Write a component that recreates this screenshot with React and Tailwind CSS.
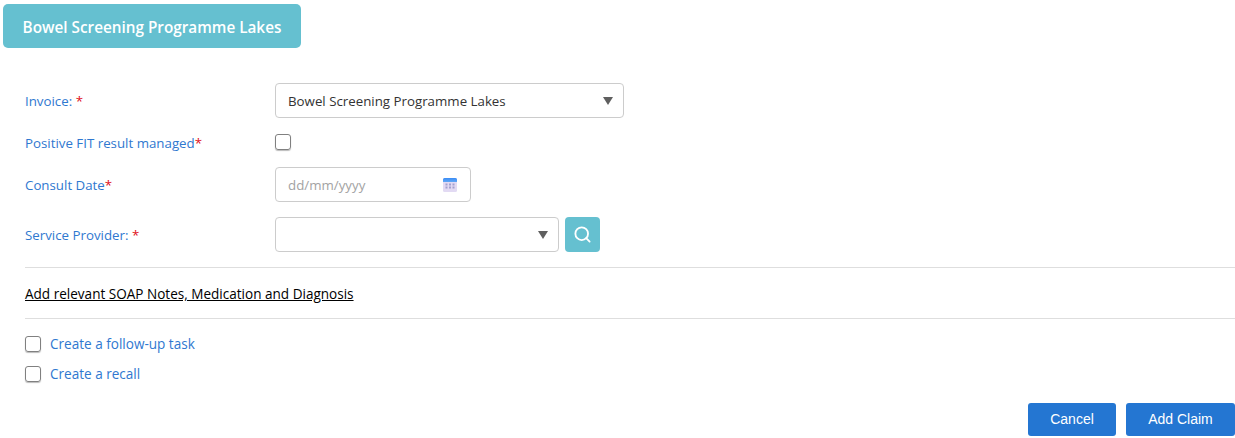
import React from 'react';
import { Search } from 'lucide-react';

const font = "font-['Open_Sans','Noto_Sans',sans-serif]";

const Req = () => <span className="text-[#e0101a]">*</span>;

const Label = ({ children }) => (
  <label className="w-[250px] shrink-0 text-[13.3px] leading-[18px] text-[#2f78d0]">{children}</label>
);

const Caret = () => (
  <svg width="10" height="8" viewBox="0 0 10 8" className="absolute right-[10px] top-[13px]">
    <path d="M0 0h10L5 8z" fill="#5f5f5f" />
  </svg>
);

const Check = ({ className = '' }) => (
  <span className={`block h-4 w-4 shrink-0 rounded-[3px] border border-[#808080] shadow-[0_1px_1px_#bbb] ${className}`} />
);

const CalendarIcon = () => (
  <svg width="14" height="14" viewBox="0 0 14 14" className="absolute right-[13px] top-[10px]">
    <defs>
      <linearGradient id="calTop" x1="0" y1="0" x2="0" y2="1">
        <stop offset="0" stopColor="#3a8cf5" />
        <stop offset="1" stopColor="#62a8f5" />
      </linearGradient>
    </defs>
    <rect x="0" y="0" width="14" height="14" rx="1.5" fill="#e2daf3" />
    <path d="M0 1.5A1.5 1.5 0 0 1 1.5 0h11A1.5 1.5 0 0 1 14 1.5V4H0z" fill="url(#calTop)" />
    <g fill="#a3a1d0">
      <rect x="2.5" y="5.5" width="2" height="2" />
      <rect x="6" y="5.5" width="2" height="2" />
      <rect x="9.5" y="5.5" width="2" height="2" />
      <rect x="2.5" y="8.5" width="2" height="2" />
      <rect x="6" y="8.5" width="2" height="2" />
      <rect x="9.5" y="8.5" width="2" height="2" />
    </g>
  </svg>
);

const App = () => {
  return (
    <div className={`h-[438px] w-[1235px] overflow-hidden bg-white ${font}`}>
      <div className="pl-[3px] pt-1">
        <div className="flex h-11 w-[298px] items-center justify-center rounded-[5px] bg-[#65c0d0] pt-[3px] text-[15.3px] font-semibold text-white">
          Bowel Screening Programme Lakes
        </div>
      </div>

      <div className="pl-[25px] pt-[35px]">
        <div className="flex h-[35px] items-center">
          <Label>Invoice: <Req /></Label>
          <div className="relative flex h-[35px] w-[349px] items-center rounded-[4px] border border-[#cccccc] pl-3 pt-[2px] text-[13.3px] text-[#333]">
            Bowel Screening Programme Lakes
            <Caret />
          </div>
        </div>

        <div className="mt-[7px] flex h-[35px] items-center">
          <Label>Positive FIT result managed<Req /></Label>
          <Check className="mb-[2px]" />
        </div>

        <div className="mt-[7px] flex h-[35px] items-center">
          <Label>Consult Date<Req /></Label>
          <div className="relative flex h-[35px] w-[196px] items-center rounded-[4px] border border-[#cccccc] pl-3 pt-[2px] text-[13.3px] text-[#a3a3a3]">
            dd/mm/yyyy
            <CalendarIcon />
          </div>
        </div>

        <div className="mt-[15px] flex h-[35px] items-center">
          <Label>Service Provider: <Req /></Label>
          <div className="relative h-[35px] w-[284px] rounded-[4px] border border-[#cccccc]">
            <Caret />
          </div>
          <div className="ml-[6px] flex h-[35px] w-[35px] items-center justify-center rounded-[4px] bg-[#65c0d0]">
            <Search size={19} strokeWidth={2.3} className="text-white" />
          </div>
        </div>

        <hr className="mt-[15px] border-[#dedede]" />
        <div className="flex h-[50px] items-center pt-[2px]">
          <a className="text-[13.55px] leading-[18px] text-black underline">Add relevant SOAP Notes, Medication and Diagnosis</a>
        </div>
        <hr className="border-[#dedede]" />

        <div className="mt-[17px] flex h-4 items-center gap-[9px]">
          <Check />
          <span className="text-[13.55px] text-[#2f78d0]">Create a follow-up task</span>
        </div>
        <div className="mt-[14px] flex h-4 items-center gap-[9px]">
          <Check />
          <span className="text-[13.55px] text-[#2f78d0]">Create a recall</span>
        </div>

        <div className="mt-[21px] flex justify-end gap-[10px] font-['Liberation_Sans',sans-serif] text-[14px] text-white">
          <button className="h-[33px] w-[88px] rounded-[3px] bg-[#2476d2]">Cancel</button>
          <button className="h-[33px] w-[109px] rounded-[3px] bg-[#2476d2]">Add Claim</button>
        </div>
      </div>
    </div>
  );
};

export default App;
